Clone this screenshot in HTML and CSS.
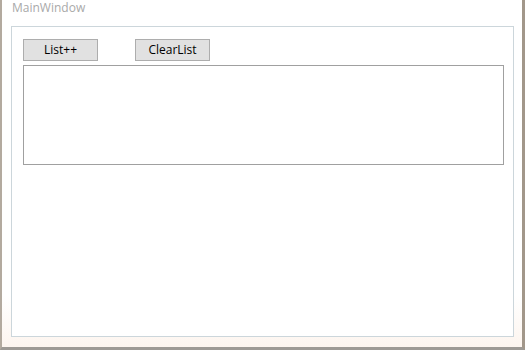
FILE: index.html
```html
<!DOCTYPE html>
<html>
<head>
<meta charset="utf-8">
<link rel="stylesheet" href="styles.css">
</head>
<body>
<div class="window">
  <div class="frame">
    <div class="titlebar">MainWindow</div>
    <div class="client">
      <div class="toolbar">
        <button class="btn">List++</button>
        <button class="btn">ClearList</button>
      </div>
      <div class="listbox"></div>
    </div>
  </div>
</div>
</body>
</html>
```
FILE: styles.css
```css
html, body {
  margin: 0;
  padding: 0;
  width: 525px;
  height: 350px;
  overflow: hidden;
  background: #ffffff;
  font-family: "Open Sans", "Noto Sans", sans-serif;
}
.window {
  box-sizing: border-box;
  width: 525px;
  height: 350px;
  border-left: 2px solid #b3aa9f;
  border-right: 3px solid #a2978a;
  border-bottom: 3px solid #9e9a95;
  background: linear-gradient(#ffffff 85%, #fdf5ef);
}
.frame {
  display: flex;
  flex-direction: column;
  height: 100%;
  padding: 0 8px 10px 9px;
  box-sizing: border-box;
}
.titlebar {
  height: 26px;
  box-sizing: border-box;
  padding-left: 1px;
  font-size: 12px;
  line-height: 16px;
  color: #a9a9a9;
}
.client {
  flex: 1;
  border: 1px solid #ccd6db;
  background: #ffffff;
  padding: 12px 9px 0 11px;
  display: flex;
  flex-direction: column;
  gap: 4px;
}
.toolbar {
  display: flex;
  gap: 37px;
}
.btn {
  width: 75px;
  height: 22px;
  margin: 0;
  padding: 0;
  border: 1px solid #adadad;
  background: #e1e1e1;
  font-family: "Open Sans", "Noto Sans", sans-serif;
  font-size: 12px;
  color: #000000;
  line-height: 18px;
}
.listbox {
  width: 481px;
  height: 100px;
  box-sizing: border-box;
  border: 1px solid #a0a0a0;
  background: #ffffff;
}
```
